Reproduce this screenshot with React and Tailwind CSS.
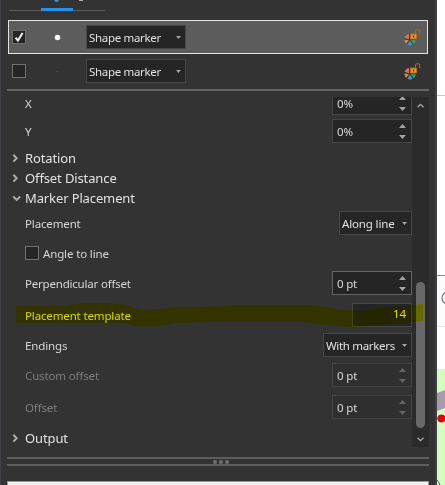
import React from 'react';
import clsx from 'clsx';

const Caret = ({ className }) => (
  <svg className={clsx('shrink-0', className)} width="5" height="3" viewBox="0 0 5 3">
    <path d="M0 0h5L2.5 3z" fill="#a3a3a3" />
  </svg>
);

const Dropdown = ({ label, className, arrow = 'mr-1' }) => (
  <div className={clsx('h-6 shrink-0 flex items-center justify-between border border-[#464646] bg-[#252525] pl-[2px] text-[#e0e0e0] whitespace-nowrap', className)}>
    <span className="pt-0.5">{label}</span>
    <Caret className={arrow} />
  </div>
);

const Spinner = ({ value, disabled, active }) => (
  <div
    className={clsx(
      'w-20 h-6 shrink-0 flex items-center justify-between border pl-1 pr-[5px] text-[#d8d8d8]',
      disabled ? 'bg-[#2f2f2f] border-[#434343]' : 'bg-[#252525]',
      !disabled && (active ? 'border-[#646464]' : 'border-[#464646]')
    )}
  >
    <span className="pt-0.5">{value}</span>
    <svg width="7" height="15" viewBox="0 0 7 15" fill={disabled ? '#636363' : '#a3a3a3'}>
      <path d="M0 4h7L3.5 0zM0 11h7L3.5 15z" />
    </svg>
  </div>
);

const Checkbox = ({ checked }) => (
  <div className="w-3.5 h-3.5 shrink-0 border border-[#707070] bg-[#252525]">
    {checked && (
      <svg width="12" height="12" viewBox="0 0 12 12" fill="none">
        <path d="M2.600 6.600l2.300 3L9.600 2" stroke="#f0f0f0" strokeWidth="2" />
      </svg>
    )}
  </div>
);

const ColorLockIcon = () => (
  <svg className="shrink-0" width="17" height="17" viewBox="0 0 17 17">
    <path d="M5.500 10.500L0.600 9A5.500 5.500 0 0 1 5 5z" fill="#d0735a" />
    <path d="M5.200 10.800L0.400 10.500A5.500 5.500 0 0 0 2.400 15z" fill="#dc8c2c" />
    <path d="M5.900 11.200L3.200 15.800a5.500 5.500 0 0 0 5.600 0z" fill="#3590cc" />
    <path d="M6.800 11.200h5a5.500 5.500 0 0 1-2.400 4z" fill="#429a50" />
    <path d="M0.300 9.900L5.500 10.700L2.600 15.400M5.900 10.900L9.100 15.500M5.500 5v5.500H12" fill="none" stroke="#38342f" strokeWidth="0.9" />
    <path d="M11.500 4.500V2.500Q11.500.8 13 .8h1Q15.700.8 15.700 2.500V5" fill="none" stroke="#a0692c" strokeWidth="1.1" />
    <path d="M6.500 5h6v5h-6z" fill="#dc9236" stroke="#b56e1c" />
    <path d="M9 6.500h1v2H9z" fill="#2e261b" />
  </svg>
);

const LayerRow = ({ selected }) => (
  <div
    className={clsx(
      'h-[34px] ml-px w-[420px] flex items-center border pl-[3px] pr-1.5',
      selected ? 'border-[#e4e4e4] bg-[#5c5c5c]' : 'border-transparent'
    )}
  >
    <Checkbox checked={selected} />
    <div className="w-[60px] flex items-center pl-[28px]">
      <svg width="7" height="7" viewBox="0 0 7 7">
        {selected ? <circle cx="3.5" cy="3.5" r="2.8" fill="#fff" /> : <path d="M2 3h2v1H2z" fill="#4c4c4c" />}
      </svg>
    </div>
    <Dropdown label="Shape marker" className="w-[100px] tracking-[-0.32px]" />
    <div className="flex-1" />
    <ColorLockIcon />
  </div>
);

const Section = ({ title, open, className = 'h-5' }) => (
  <div className={clsx('shrink-0 flex items-center pl-[5px] text-[13px] tracking-[-0.12px] text-[#e2e2e2]', className)}>
    <svg className="shrink-0" width="9" height="9" viewBox="0 0 9 9" fill="none" stroke="#aaa" strokeWidth="2">
      {open ? <path d="M1.200 2.600l3.500 3.300 3.500-3.300" /> : <path d="M1.400 0.800l3.300 3.400-3.300 3.400" />}
    </svg>
    <span className="ml-1 pb-px">{title}</span>
  </div>
);

const Row = ({ label, disabled, className, children }) => (
  <div className={clsx('shrink-0 flex items-center justify-between pl-[18px]', className)}>
    <span className={clsx('pt-0.5', disabled ? 'text-[#7c7c7c]' : 'text-[#d6d6d6]')}>{label}</span>
    {children}
  </div>
);

const Highlight = () => (
  <svg className="absolute left-0 top-[300px] mix-blend-multiply" width="424" height="30" viewBox="0 0 424 30">
    <path
      d="M16 6H64L75 4L85 3H108L125 4.500L134 8L141 10L165 8.500L175 7L220 6.500L238 5H308L325 7L340 9.500L362 11L380 8L400 6L412 5L423 4V21L400 23L375 25L361 26.500L350 27L335 26L320 24.500L300 22H220L175 23L158 26L140 26.500L132 25.500L124 23L16 23Z"
      fill="#ffff00"
    />
  </svg>
);

const MapStrip = () => (
  <div className="w-2 h-[485px] bg-white overflow-hidden flex flex-col">
    <div className="h-24 shrink-0 border-b border-[#c8c8c8]" />
    <div className="h-[180px] shrink-0 border-b border-[#8c8c8c]" />
    <div className="h-[51px] shrink-0 border-b border-[#e8e8e8] bg-[#fcfcfc] pt-3.5">
      <svg className="ml-1" width="16" height="16" viewBox="0 0 16 16">
        <circle cx="7" cy="8" r="6" fill="none" stroke="#7b7b86" strokeWidth="1.3" />
      </svg>
    </div>
    <div className="h-[42px] shrink-0" />
    <svg className="shrink-0" width="8" height="116" viewBox="0 0 8 116">
      <path d="M0 0h8v116H0z" fill="#d3ffbe" />
      <path d="M0 24l8-3v18l-8 3z" fill="#a898b0" />
      <circle cx="4.500" cy="49.500" r="4" fill="#e60000" />
      <path d="M0 48.500h1.500v2H0z" fill="#c04040" />
      <path d="M0 111q2 2 3 5" stroke="#555" fill="none" />
    </svg>
  </div>
);

const App = () => {
  return (
    <div className="relative w-[445px] h-[485px] overflow-hidden flex bg-white text-[11.5px] leading-[14px] tracking-[-0.14px]" style={{ fontFamily: '"Noto Sans", "Open Sans", sans-serif' }}>
      <div className="w-[437px] h-[485px] shrink-0 bg-[#333333] border-l border-[#414147] border-r-2 border-r-[#404145] pl-1.5 flex flex-col overflow-hidden">
        {/* Tabs */}
        <div className="h-5 shrink-0 pl-0.5">
          <div className="h-2 flex items-start">
            <svg className="ml-[44px]" width="32" height="2" viewBox="0 0 32 2">
              <path d="M1 0h5L4.500 2h-2z" fill="#3b8fc0" />
              <path d="M26 0h4v1h-4z" fill="#aaa" />
            </svg>
          </div>
          <div className="w-24 h-[3px] flex items-end">
            <div className="w-8 h-px bg-[#5e5e5e]" />
            <div className="w-8 h-[3px] bg-[#2493ee]" />
            <div className="w-8 h-px bg-[#5e5e5e]" />
          </div>
        </div>

        {/* Symbol layers */}
        <div className="h-[69px] shrink-0">
          <LayerRow selected />
          <LayerRow />
        </div>
        <div className="w-[422px] h-0.5 shrink-0 bg-[#646464]" />

        {/* Properties */}
        <div className="mt-1.5 w-[422px] h-[350px] shrink-0 flex overflow-hidden">
          <div className="-mt-2 w-[405px] shrink-0 flex flex-col">
            <Row label="X" className="h-7"><Spinner value="0%" /></Row>
            <Row label="Y" className="h-7"><Spinner value="0%" /></Row>
            <div className="shrink-0 pt-[3px]">
              <Section title="Rotation" />
              <Section title="Offset Distance" />
              <Section title="Marker Placement" open />
            </div>
            <Row label="Placement" className="h-[30px]">
              <Dropdown label="Along line" className="w-[73px]" />
            </Row>
            <div className="h-[30px] shrink-0 flex items-center pl-[18px] gap-1 text-[#d6d6d6]">
              <Checkbox />
              <span className="pt-0.5">Angle to line</span>
            </div>
            <Row label="Perpendicular offset" className="h-[30px] tracking-[-0.2px]"><Spinner value="0 pt" active /></Row>
            <Row label="Placement template" className="h-[34px]">
              <div className="w-[60px] h-6 border border-[#464646] bg-[#252525] pr-[5px] pt-[3px] text-right text-[#e0e0e0]">14</div>
            </Row>
            <Row label="Endings" className="h-[26px]">
              <Dropdown label="With markers" className="w-[89px] tracking-[-0.32px]" />
            </Row>
            <Row label="Custom offset" disabled className="h-[34px]"><Spinner value="0 pt" disabled /></Row>
            <Row label="Offset" disabled className="h-[30px]"><Spinner value="0 pt" disabled /></Row>
            <Section title="Output" className="h-8" />
          </div>

          {/* Scrollbar */}
          <div className="w-[17px] h-[350px] bg-[#2b2b2b] flex flex-col items-center pt-1.5">
            <svg className="shrink-0" width="7" height="5" viewBox="0 0 7 5" fill="none" stroke="#aaa" strokeWidth="1.3">
              <path d="M.5 4.300l3-3 3 3" />
            </svg>
            <div className="mt-[174px] w-[9px] h-[146px] shrink-0 rounded-full bg-[#686868]" />
            <svg className="mt-[9px] shrink-0" width="7" height="5" viewBox="0 0 7 5" fill="none" stroke="#aaa" strokeWidth="1.3">
              <path d="M.5 .7l3 3 3-3" />
            </svg>
          </div>
        </div>

        {/* Splitter */}
        <div className="mt-2.5 w-[422px] h-[9px] shrink-0 border-y-2 border-[#5e5e5e] flex items-center justify-center gap-0.5 pl-1.5">
          <div className="w-1 h-1 rounded-full bg-[#707070]" />
          <div className="w-1 h-1 rounded-full bg-[#707070]" />
          <div className="w-1 h-1 rounded-full bg-[#707070]" />
        </div>
        <div className="mt-[15px] w-[422px] h-6 shrink-0 border border-[#9a9a9a] bg-[#f2f2f2]" />
      </div>
      <MapStrip />
      <Highlight />
    </div>
  );
};

export default App;
